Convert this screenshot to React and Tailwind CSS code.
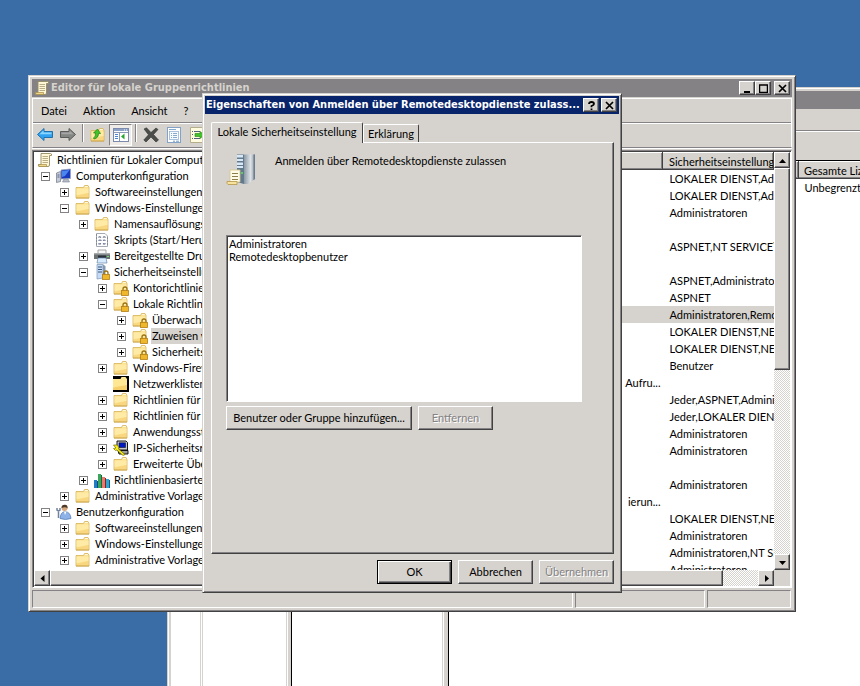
import React, { useState } from 'react';
import clsx from 'clsx';

const raised =
  'border border-t-white border-l-white border-r-[#424142] border-b-[#424142] bg-[#d6d3ce] shadow-[inset_-1px_-1px_0_#848284]';
const sunken =
  'border border-t-[#848284] border-l-[#848284] border-r-white border-b-white shadow-[inset_1px_1px_0_#424142]';
const windowFrame =
  'border border-t-[#d6d3ce] border-l-[#d6d3ce] border-r-[#424142] border-b-[#424142] bg-[#d6d3ce] shadow-[inset_1px_1px_0_#ffffff,inset_-1px_-1px_0_#848284]';
const track =
  'bg-[repeating-conic-gradient(#ffffff_0_25%,#d6d3ce_0_50%)] bg-[length:2px_2px]';

const FolderShape = () => (
  <>
    <path d="M1 3.5 H8.5 L9.5 1.5 H13 L14 3.5 V14 H1 Z" fill="#fbe08c" stroke="#d6b25a" strokeWidth="0.8" />
    <path d="M1.5 4.5 H13.5 V9 L1.5 11 Z" fill="#ffeba5" />
    <path d="M9.8 2.6 H12.8" stroke="#fffbe7" />
    <path d="M1.5 12 L13.5 9 V13.5 H1.5 Z" fill="#f7d37b" opacity="0.7" />
    <path d="M1 14 H14" stroke="#c69e42" strokeWidth="0.8" />
  </>
);

const LockShape = () => (
  <>
    <path d="M10 11 V9 A2 2 0 0 1 14 9 V11" fill="none" stroke="#9c7110" strokeWidth="1.3" />
    <rect x="8.5" y="10.5" width="7" height="5" fill="#e7a618" stroke="#b58218" strokeWidth="0.8" />
    <path d="M9 12 H15 M9 14 H15" stroke="#ffd752" strokeWidth="0.7" />
  </>
);

const ScrollShape = () => (
  <>
    <path d="M4 1.5 H13.5 Q15 1.5 14.5 3.5 H12.5 V13 Q12.5 14.5 11 14.5 H2 Q1 14.5 1.5 12.5 H4 Z" fill="#fff7d6" stroke="#948a63" strokeWidth="0.9" />
    <path d="M5.5 4.5 H11 M5.5 6.5 H11 M5.5 8.5 H11 M5.5 10.5 H11" stroke="#a59a73" strokeWidth="0.8" />
    <path d="M1.5 12.5 H9.5 V14.5 H2 Z" fill="#efd78c" stroke="#a58e4a" strokeWidth="0.7" />
  </>
);

const shapes = {
  folder: <FolderShape />,
  folderLock: (
    <>
      <FolderShape />
      <LockShape />
    </>
  ),
  folderDark: (
    <>
      <path d="M0 0 H16 V16 H0 Z" fill="#000000" />
      <path d="M0 3 H7.5 L8.5 1 H12.5 L14 3 V14 H0 Z" fill="#ffe794" />
      <path d="M0 11.5 L14 9 V14 H0 Z" fill="#f7cf6b" />
    </>
  ),
  scroll: <ScrollShape />,
  computer: (
    <>
      <path d="M0.5 5 L4.5 3.5 V13.5 L0.5 14.5 Z" fill="#c6cbd6" stroke="#6b7384" strokeWidth="0.7" />
      <path d="M1.5 7 H3.5 M1.5 9 H3.5" stroke="#526184" />
      <path d="M5 2 L14.5 1 V10.5 L5 11 Z" fill="#1838bd" stroke="#9ca6bd" strokeWidth="0.8" />
      <path d="M6 3 L13.5 2 L9 8 L6 9 Z" fill="#4a86ef" />
      <path d="M8 11 H12 L13.5 14 H6.5 Z" fill="#b5bac6" stroke="#7b8494" strokeWidth="0.6" />
    </>
  ),
  script: (
    <>
      <path d="M2.5 1.5 H11 L13.5 4 V14.5 H2.5 Z" fill="#ffffff" stroke="#a5aab5" />
      <path d="M4.5 5.5 q1 -1.5 2.5 0 M9 5.5 q1 -1.5 2.5 0 M4.5 8.5 q1.5 -1 3 0 M9 8.5 q1 -1 2.5 0 M4.5 11.5 q1 1 2.5 0 M9 11.5 q1 1 2.5 0" fill="none" stroke="#5a6584" strokeWidth="1.1" />
      <path d="M2 3 h1 M2 6 h1 M2 9 h1 M2 12 h1 M13 6 h1 M13 9 h1 M13 12 h1" stroke="#636b7b" />
    </>
  ),
  printer: (
    <>
      <path d="M4 2 H12 V6 H4 Z" fill="#f7f7f7" stroke="#848284" strokeWidth="0.7" />
      <path d="M0 5 H16 V11 H0 Z" fill="#6b7173" />
      <path d="M0 5 H16 V6.5 H0 Z" fill="#a5aaad" />
      <path d="M4 7.5 H12 V10 H4 Z" fill="#29303a" />
      <path d="M4 10 H12 L13 15 H3 Z" fill="#d6ebff" stroke="#6b86a5" strokeWidth="0.7" />
      <path d="M13 8.5 h2" stroke="#6bdf6b" />
    </>
  ),
  serverLock: (
    <>
      <path d="M3 0.5 H9 V14 L3 15 Z" fill="#c6dbf7" stroke="#7b96b5" strokeWidth="0.7" />
      <path d="M9 0.5 L11.5 2 V12 L9 14 Z" fill="#8499ad" />
      <path d="M4 3 H8 M4 5.5 H8 M4 8 H8" stroke="#39597b" />
      <LockShape />
    </>
  ),
  ipsec: (
    <>
      <path d="M4 1 H13 L14.5 2.5 V10 H5.5 L4 8.5 Z" fill="#c6c7c6" stroke="#000000" strokeWidth="0.9" />
      <path d="M6 2.8 H12.5 V7.5 H6 Z" fill="#0018c6" stroke="#000000" strokeWidth="0.5" />
      <path d="M5 10.5 H15 V14 H6 Z" fill="#9c9e9c" stroke="#000000" strokeWidth="0.9" />
      <path d="M0.5 5 L4.5 5 L6 8 L5.5 9 L12 14.5 L10 15.5 L4 10 L2.5 10.5 L0.5 8.5 L3 8 Z" fill="#fff318" stroke="#6b6900" strokeWidth="0.7" />
    </>
  ),
  bars: (
    <>
      <rect x="0" y="8" width="3" height="8" fill="#217dc6" />
      <rect x="3" y="9" width="1" height="7" fill="#104d84" />
      <rect x="4" y="2" width="3" height="14" fill="#39a65a" />
      <rect x="7" y="3" width="1" height="13" fill="#18693a" />
      <rect x="8" y="5" width="3" height="11" fill="#e77973" />
      <rect x="11" y="6" width="1" height="10" fill="#842421" />
      <rect x="12" y="7" width="3" height="9" fill="#31a6ce" />
      <rect x="15" y="8" width="1" height="8" fill="#185984" />
    </>
  ),
  user: (
    <>
      <circle cx="8.5" cy="4" r="3" fill="#d6a67b" />
      <path d="M5.5 4 Q5.5 0.5 9 0.7 Q12 1 11.5 4.5 Q10 2.5 5.5 4 Z" fill="#4a3829" />
      <path d="M4 14.5 Q4.5 8 9 7.5 Q14.5 8 15 14.5 Q9.5 16.5 4 14.5 Z" fill="#8cb2e7" stroke="#5279b5" strokeWidth="0.7" />
      <path d="M8 7.5 L9 11 L10.5 7.5 Z" fill="#ffffff" />
      <path d="M1 4 V6 L2.5 7 L4 6 V4 M2.5 7 V14" fill="none" stroke="#73829c" strokeWidth="1.5" />
    </>
  ),
  back: (
    <>
      <path d="M0.5 7.5 L7 1.5 V4.5 H15.5 V10.5 H7 V13.5 Z" fill="#31a2ef" stroke="#2171ad" />
      <path d="M2.5 7.2 L6.5 3.5 V5.5 H14.5 V7.2 Z" fill="#8cd7ff" />
    </>
  ),
  forward: (
    <>
      <path d="M15.5 7.5 L9 1.5 V4.5 H0.5 V10.5 H9 V13.5 Z" fill="#848684" stroke="#5a5d5a" />
      <path d="M13.5 7.2 L9.5 3.5 V5.5 H1.5 V7.2 Z" fill="#a5a6a5" />
    </>
  ),
  folderUp: (
    <>
      <FolderShape />
      <path d="M4 12 Q8.5 11 8.5 6.5 H10.5 L7.5 2 L3.5 6 H5.5 Q6 9.5 3.5 11 Z" fill="#42c329" stroke="#218210" strokeWidth="0.7" />
    </>
  ),
  panes: (
    <>
      <rect x="0.5" y="1.5" width="15" height="13" fill="#ffffff" stroke="#7b8aad" />
      <path d="M1 2 H15 V4 H1 Z" fill="#8ca2c6" />
      <path d="M11 3 h1 M13 3 h1" stroke="#ffffff" />
      <path d="M6.5 5 V14 M1 5.5 H15" stroke="#8c9ab5" />
      <path d="M2 7.5 h3 M2 9.5 h3 M2 11.5 h3" stroke="#4a86d6" />
      <path d="M11.5 6.5 V12.5 L8 9.5 Z" fill="#29a631" />
    </>
  ),
  remove: (
    <path d="M1 2 L3.5 0.8 L8 5.5 L13 1 L15 2.5 L10.5 7.5 L15.5 13 L13 15 L8 10 L3 15 L0.8 13 L5.5 7.8 Z" fill="#4a4d4a" stroke="#313431" strokeWidth="0.6" />
  ),
  properties: (
    <>
      <rect x="1.5" y="0.5" width="13" height="15" fill="#ffffff" stroke="#84a2c6" />
      <rect x="3.5" y="4.5" width="9" height="8" fill="#f7fbff" stroke="#94b2d6" strokeWidth="0.8" />
      <path d="M3 2.5 H10 M5 6.5 h1 M7 6.5 h4 M5 8.5 h1 M7 8.5 h4 M5 10.5 h1 M7 10.5 h4" stroke="#84aace" />
      <path d="M7 14.2 h2 M10 14.2 h3" stroke="#6b9ac6" />
    </>
  ),
  exportList: (
    <>
      <path d="M1.5 0.5 H13.5 V15.5 H1.5 Z" fill="#fffbde" stroke="#b5ae8c" />
      <path d="M3 4.5 h1 M5 4.5 h6 M3 7.5 h1 M3 11.5 h1 M5 11.5 h6" stroke="#52617b" />
      <path d="M6 6.5 H11 V4.5 L15.5 8 L11 11.5 V9.5 H6 Z" fill="#42c329" stroke="#218210" strokeWidth="0.6" />
    </>
  ),
};

const Icon = ({ name }) => (
  <svg className="h-4 w-4 shrink-0" viewBox="0 0 16 16" aria-hidden="true">
    {shapes[name]}
  </svg>
);

const PolicyIcon = () => (
  <svg className="h-[34px] w-8 shrink-0" viewBox="0 0 32 34" aria-hidden="true">
    <defs>
      <linearGradient id="tower" x1="0" x2="1" y1="0" y2="0">
        <stop offset="0" stopColor="#8c9aa5" />
        <stop offset="0.6" stopColor="#dee3e7" />
        <stop offset="1" stopColor="#8c96a5" />
      </linearGradient>
    </defs>
    <path d="M18 1.5 H29 V26 L22 31 H18 Z" fill="url(#tower)" />
    <path d="M27.5 1.5 H29 V26 L27.5 27 Z" fill="#6b7d8c" />
    <path d="M11 1.5 H18 V31 L11 29 Z" fill="#63798c" />
    <path d="M11 2 H17 V4.5 H11 Z M11 6 H17 V8 H11 Z M11 9.5 H17 V12 H11 Z M11 13 H17 V15 H11 Z" fill="#d6e7f7" />
    <circle cx="16" cy="20" r="1" fill="#5ae75a" />
    <path d="M4 17 H14 V29 H4 Z" fill="#fffbe7" stroke="#d6c68c" strokeWidth="0.8" />
    <path d="M6 20.5 H12 M6 23.5 H12 M6 26.5 H12" stroke="#8c7d4a" />
    <path d="M1 28.5 H11 V31.5 H2 Q0.5 30.5 1 28.5 Z" fill="#f7e39c" stroke="#b5964a" strokeWidth="0.8" />
  </svg>
);

const glyphs = {
  minimize: <path d="M1 8 H7" stroke="#000000" strokeWidth="2" />,
  maximize: <path d="M0.5 1 V8.5 H8.5 V1 M0 1 H9" fill="none" stroke="#000000" strokeWidth="1.5" />,
  close: <path d="M1 1 L8 8 M8 1 L1 8" stroke="#000000" strokeWidth="1.7" />,
  help: (
    <path d="M2 3 Q2 1 4.5 1 Q7 1 7 3 Q7 4 4.5 5 V6.2 M4.5 7.5 V9" fill="none" stroke="#000000" strokeWidth="1.8" />
  ),
};

const CaptionButton = ({ type, label, onClick }) => (
  <button type="button" aria-label={label} onClick={onClick} className={clsx('flex h-3.5 w-4 items-center justify-center', raised)}>
    <svg className="h-[9px] w-[9px]" viewBox="0 0 9 9" aria-hidden="true">
      {glyphs[type]}
    </svg>
  </button>
);

const arrows = {
  up: 'M0 6 H7 L3.5 2 Z',
  down: 'M0 2 H7 L3.5 6 Z',
  left: 'M5.5 0 V7 L1.5 3.5 Z',
  right: 'M2 0 V7 L6 3.5 Z',
};

const ScrollButton = ({ dir, label }) => (
  <button type="button" aria-label={label} className={clsx('flex h-4 w-4 shrink-0 items-center justify-center', raised)}>
    <svg className="h-[7px] w-[7px]" viewBox="0 0 7 7" aria-hidden="true">
      <path d={arrows[dir]} fill="#000000" />
    </svg>
  </button>
);

const treeItems = [
  { level: 0, icon: 'scroll', label: 'Richtlinien für Lokaler Computer' },
  { level: 1, box: '-', icon: 'computer', label: 'Computerkonfiguration' },
  { level: 2, box: '+', icon: 'folder', label: 'Softwareeinstellungen' },
  { level: 2, box: '-', icon: 'folder', label: 'Windows-Einstellungen' },
  { level: 3, box: '+', icon: 'folder', label: 'Namensauflösungsrichtlinie' },
  { level: 3, icon: 'script', label: 'Skripts (Start/Herunterfahren)' },
  { level: 3, box: '+', icon: 'printer', label: 'Bereitgestellte Drucker' },
  { level: 3, box: '-', icon: 'serverLock', label: 'Sicherheitseinstellungen' },
  { level: 4, box: '+', icon: 'folderLock', label: 'Kontorichtlinien' },
  { level: 4, box: '-', icon: 'folderLock', label: 'Lokale Richtlinien' },
  { level: 5, box: '+', icon: 'folderLock', label: 'Überwachungsrichtlinie' },
  { level: 5, box: '+', icon: 'folderLock', label: 'Zuweisen von Benutzerrechten' },
  { level: 5, box: '+', icon: 'folderLock', label: 'Sicherheitsoptionen' },
  { level: 4, box: '+', icon: 'folder', label: 'Windows-Firewall' },
  { level: 4, icon: 'folderDark', label: 'Netzwerklisten-Manager' },
  { level: 4, box: '+', icon: 'folder', label: 'Richtlinien für öffentliche' },
  { level: 4, box: '+', icon: 'folder', label: 'Richtlinien für Software' },
  { level: 4, box: '+', icon: 'folder', label: 'Anwendungssteuerung' },
  { level: 4, box: '+', icon: 'ipsec', label: 'IP-Sicherheitsrichtlinien' },
  { level: 4, box: '+', icon: 'folder', label: 'Erweiterte Überwachung' },
  { level: 3, box: '+', icon: 'bars', label: 'Richtlinienbasierter QoS' },
  { level: 2, box: '+', icon: 'folder', label: 'Administrative Vorlagen' },
  { level: 1, box: '-', icon: 'user', label: 'Benutzerkonfiguration' },
  { level: 2, box: '+', icon: 'folder', label: 'Softwareeinstellungen' },
  { level: 2, box: '+', icon: 'folder', label: 'Windows-Einstellungen' },
  { level: 2, box: '+', icon: 'folder', label: 'Administrative Vorlagen' },
];

const indents = ['pl-[3px]', 'pl-[3px]', 'pl-[22px]', 'pl-[41px]', 'pl-[60px]', 'pl-[79px]'];

const settings = [
  ['', 'LOKALER DIENST,Administratoren'],
  ['', 'LOKALER DIENST,Administratoren'],
  ['', 'Administratoren'],
  ['', ''],
  ['', 'ASPNET,NT SERVICE\\'],
  ['', ''],
  ['', 'ASPNET,Administratoren'],
  ['', 'ASPNET'],
  ['', 'Administratoren,Remotedesktopbenutzer'],
  ['', 'LOKALER DIENST,NETZWERKDIENST'],
  ['', 'LOKALER DIENST,NETZWERKDIENST'],
  ['', 'Benutzer'],
  ['Aufru...', ''],
  ['', 'Jeder,ASPNET,Administratoren'],
  ['', 'Jeder,LOKALER DIENST'],
  ['', 'Administratoren'],
  ['', 'Administratoren'],
  ['', ''],
  ['', 'Administratoren'],
  ['ierun...', ''],
  ['', 'LOKALER DIENST,NETZWERKDIENST'],
  ['', 'Administratoren'],
  ['', 'Administratoren,NT SERVICE'],
  ['', 'Administratoren'],
];

const Tree = () => {
  const [selected, setSelected] = useState(11);

  return (
    <div className={clsx('w-60 shrink-0 overflow-hidden bg-white p-px', sunken)}>
      <ul className="pb-0.5">
        {treeItems.map((item, i) => (
          <li key={i} onClick={() => setSelected(i)} className={clsx('flex h-4 items-center gap-[3px] whitespace-nowrap', indents[item.level])}>
            <span className="flex items-center">
              {item.level > 0 && (
                <span className="flex w-[19px] pl-1">
                  {item.box && (
                    <button type="button" aria-label={item.label} className="h-[9px] w-[9px] border border-[#848284] bg-white">
                      <svg className="block h-[7px] w-[7px]" viewBox="0 0 7 7" aria-hidden="true">
                        <path d={item.box === '+' ? 'M1 3.5 H6 M3.5 1 V6' : 'M1 3.5 H6'} stroke="#000000" />
                      </svg>
                    </button>
                  )}
                </span>
              )}
              <Icon name={item.icon} />
            </span>
            <span className={clsx('h-4 px-px leading-4', i === selected && 'bg-[#d6d3ce]')}>{item.label}</span>
          </li>
        ))}
      </ul>
      <div className="flex">
        <ScrollButton dir="left" label="Nach links" />
        <div className={clsx('h-4 flex-1', raised)} />
        <ScrollButton dir="right" label="Nach rechts" />
      </div>
    </div>
  );
};

const SettingsList = () => (
  <div className={clsx('min-w-0 flex-1 bg-white p-px', sunken)}>
    <div className="flex h-[418px]">
      <div className="min-w-0 flex-1 overflow-hidden">
        <table className="w-full table-fixed border-collapse whitespace-nowrap text-left">
          <thead>
            <tr className="h-[17px]">
              <th className={clsx('p-0 font-normal', raised)} />
              <th className={clsx('w-[111px] overflow-hidden p-0 pl-1.5 font-normal leading-[15px]', raised)}>
                Sicherheitseinstellung
              </th>
            </tr>
          </thead>
          <tbody>
            {settings.map(([name, value], i) => (
              <tr key={i} className={clsx('h-[17px]', i === 8 && 'bg-[#d6d3ce]')}>
                <td className="p-0 pr-0.5 text-right leading-[17px]">{name}</td>
                <td className="overflow-hidden p-0 pl-[7px] leading-[17px]">{value}</td>
              </tr>
            ))}
          </tbody>
        </table>
      </div>
      <div className={clsx('flex w-4 shrink-0 flex-col', track)}>
        <ScrollButton dir="up" label="Nach oben" />
        <div className={clsx('h-[202px]', raised)} />
        <div className="flex-1" />
        <ScrollButton dir="down" label="Nach unten" />
      </div>
    </div>
    <div className={clsx('flex', track)}>
      <ScrollButton dir="left" label="Nach links" />
      <div className={clsx('h-4 flex-1', raised)} />
      <div className="w-[35px]" />
      <ScrollButton dir="right" label="Nach rechts" />
      <div className="h-4 w-4 bg-[#d6d3ce]" />
    </div>
  </div>
);

const ToolButton = ({ icon, label, pressed }) => (
  <button
    type="button"
    aria-label={label}
    className={clsx(
      'flex h-[22px] w-[23px] shrink-0 items-center justify-center',
      pressed && 'border border-t-[#848284] border-l-[#848284] border-r-white border-b-white bg-[#efebe7]'
    )}
  >
    <Icon name={icon} />
  </button>
);

const ToolSeparator = () => (
  <div className="flex w-[7px] shrink-0 justify-center">
    <div className="h-[18px] w-0.5 border-l border-r border-l-[#848284] border-r-white" />
  </div>
);

const EditorWindow = () => (
  <section className={clsx('absolute left-7 right-16 top-[75px] p-[3px]', windowFrame)}>
    <header className="flex h-[18px] items-center gap-px bg-[#848284] pl-0.5 pr-0.5 font-['DejaVu_Sans_Condensed','DejaVu_Sans',sans-serif] font-bold text-[#d6d3ce]">
      <Icon name="scroll" />
      <h1 className="flex-1 truncate">Editor für lokale Gruppenrichtlinien</h1>
      <div className="flex pr-0.5">
        <CaptionButton type="minimize" label="Minimieren" />
        <CaptionButton type="maximize" label="Maximieren" />
      </div>
      <CaptionButton type="close" label="Schließen" />
    </header>
    <div className="mt-px border border-t-white border-l-white border-r-white border-b-[#848284]">
      <nav className="flex h-6 items-center gap-4 border-b border-[#848284] pl-2">
        {['Datei', 'Aktion', 'Ansicht', '?'].map((item) => (
          <button key={item} type="button">
            {item}
          </button>
        ))}
      </nav>
      <div className="flex h-6 items-start border-t border-white">
        <ToolButton icon="back" label="Zurück" />
        <ToolButton icon="forward" label="Vorwärts" />
        <ToolSeparator />
        <ToolButton icon="folderUp" label="Eine Ebene nach oben" />
        <ToolButton icon="panes" label="Konsolenstruktur" pressed />
        <ToolSeparator />
        <ToolButton icon="remove" label="Löschen" />
        <ToolButton icon="properties" label="Eigenschaften" />
        <ToolButton icon="exportList" label="Liste exportieren" />
      </div>
    </div>
    <div className="flex gap-[3px] border-t border-white pt-px">
      <Tree />
      <SettingsList />
    </div>
    <footer className="flex h-5 gap-0.5 pr-px pt-0.5">
      <div className="flex-1 border border-t-[#848284] border-l-[#848284] border-r-white border-b-white" />
      <div className="w-[130px] border border-t-[#848284] border-l-[#848284] border-r-white border-b-white" />
      <div className="w-[84px] border border-t-[#848284] border-l-[#848284] border-r-white border-b-white" />
    </footer>
  </section>
);

// Licence manager window, mostly covered by the editor
const BackWindow = () => (
  <section className={clsx('absolute -bottom-1 left-[167px] -right-1 top-[87px] flex flex-col pl-[3px] pt-[3px]', windowFrame)}>
    <div className="h-[18px] bg-[#848284]" />
    <div className="mt-px h-[21px] border-b border-[#848284]" />
    <div className="h-[29px] border-t border-white" />
    <div className="flex min-h-0 flex-1 bg-white">
      <div className="w-[29px]" />
      <div className="w-[3px] border-l border-r border-[#d6d3ce]" />
      <div className="w-[83px]" />
      <div className="flex w-[6px] border-l border-r border-l-[#d6d3ce] border-r-black pl-px">
        <div className="flex-1 bg-[#d6d3ce]" />
      </div>
      <div className="w-[150px]" />
      <div className="flex w-[7px] border-l border-r border-l-[#d6d3ce] border-r-black pl-px">
        <div className="flex-1 bg-[#d6d3ce]" />
      </div>
      <div className="min-w-0 flex-1 overflow-hidden border-t border-black">
        <table className="w-full table-fixed border-collapse whitespace-nowrap text-left">
          <thead>
            <tr className="h-[17px]">
              <th className={clsx('p-0', raised)} />
              <th className={clsx('w-16 overflow-hidden p-0 pl-[5px] font-normal leading-[15px]', raised)}>Gesamte Lizenzen</th>
            </tr>
          </thead>
          <tbody>
            <tr>
              <td className="p-0" />
              <td className="overflow-hidden p-0 pl-1.5 leading-[17px]">Unbegrenzt</td>
            </tr>
          </tbody>
        </table>
      </div>
    </div>
  </section>
);

const PushButton = ({ children, isDefault, disabled, wide }) => (
  <button
    type="button"
    disabled={disabled}
    className={clsx(
      'h-6 shrink-0',
      wide ? 'w-[186px]' : 'w-[75px]',
      isDefault
        ? 'border border-black bg-[#d6d3ce] shadow-[inset_1px_1px_0_#ffffff,inset_-1px_-1px_0_#424142,inset_-2px_-2px_0_#848284]'
        : raised,
      disabled && 'text-[#848284] [text-shadow:1px_1px_0_#ffffff]'
    )}
  >
    {children}
  </button>
);

const PropertiesDialog = () => {
  const [tab, setTab] = useState(0);
  const tabs = ['Lokale Sicherheitseinstellung', 'Erklärung'];

  return (
    <section
      role="dialog"
      aria-labelledby="dialog-title"
      className={clsx('absolute left-[202px] top-[93px] w-[420px] p-0.5', windowFrame)}
    >
      <header className="flex h-[18px] items-center gap-0.5 bg-[#08246b] pl-px pr-0.5 font-['DejaVu_Sans_Condensed','DejaVu_Sans',sans-serif] font-bold text-white">
        <h2 id="dialog-title" className="flex-1 truncate">
          Eigenschaften von Anmelden über Remotedesktopdienste zulass...
        </h2>
        <CaptionButton type="help" label="Hilfe" />
        <CaptionButton type="close" label="Schließen" />
      </header>
      <div className="pb-1.5 pl-1.5 pr-[5px] pt-2">
        <div role="tablist" className="flex items-end">
          {tabs.map((label, i) => (
            <button
              key={label}
              type="button"
              role="tab"
              aria-selected={tab === i}
              onClick={() => setTab(i)}
              className={clsx(
                'rounded-t-xs border border-b-0 border-t-white border-l-white border-r-[#424142] bg-[#d6d3ce]',
                i === 0 ? 'w-[152px]' : 'w-14',
                tab === i ? 'relative -mb-px h-[21px] pb-0.5' : 'h-[18px]'
              )}
            >
              {label}
            </button>
          ))}
        </div>
        <div className={clsx('h-[412px] px-3.5 pt-2.5', raised)}>
          <div className="flex h-[82px] gap-[17px]">
            <PolicyIcon />
            <p className="leading-4">Anmelden über Remotedesktopdienste zulassen</p>
          </div>
          <ul
            role="listbox"
            aria-label="Benutzer und Gruppen"
            className={clsx('mr-[17px] h-[167px] bg-white px-0.5 py-px leading-[13px]', sunken)}
          >
            <li role="option">Administratoren</li>
            <li role="option">Remotedesktopbenutzer</li>
          </ul>
          <div className="mt-1 flex gap-1.5">
            <PushButton wide>Benutzer oder Gruppe hinzufügen...</PushButton>
            <PushButton disabled>Entfernen</PushButton>
          </div>
        </div>
        <div className="mt-1.5 flex justify-end gap-1.5">
          <PushButton isDefault>OK</PushButton>
          <PushButton>Abbrechen</PushButton>
          <PushButton disabled>Übernehmen</PushButton>
        </div>
      </div>
    </section>
  );
};

const App = () => (
  <main className="relative h-screen min-h-[640px] overflow-hidden bg-[#3a6da5] font-['Lato','Liberation_Sans',sans-serif] text-[11px] leading-4 text-black">
    <BackWindow />
    <EditorWindow />
    <PropertiesDialog />
  </main>
);

export default App;
